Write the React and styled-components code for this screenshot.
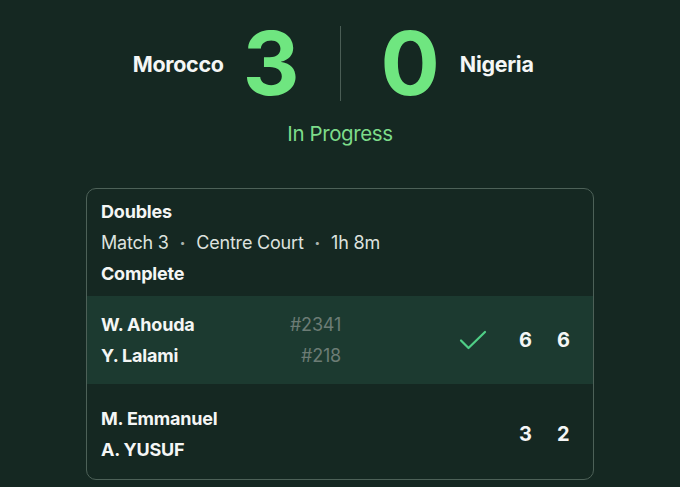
import React from "react";
import styled, { createGlobalStyle } from "styled-components";

const GlobalStyle = createGlobalStyle`
  html, body {
    margin: 0;
    padding: 0;
    background: #152822;
    font-family: Inter, "Noto Sans", sans-serif;
    color: #f4f6f5;
  }
`;

const match = {
  home: { name: "Morocco", score: 3 },
  away: { name: "Nigeria", score: 0 },
  status: "In Progress",
  event: "Doubles",
  meta: ["Match 3", "Centre Court", "1h 8m"],
  state: "Complete",
  teams: [
    {
      players: [
        { name: "W. Ahouda", rank: "#2341" },
        { name: "Y. Lalami", rank: "#218" },
      ],
      sets: [6, 6],
      winner: true,
    },
    {
      players: [{ name: "M. Emmanuel" }, { name: "A. YUSUF" }],
      sets: [3, 2],
      winner: false,
    },
  ],
};

const Page = styled.div`
  width: 680px;
  height: 487px;
  overflow: hidden;
  padding-top: 26px;
  box-sizing: border-box;
`;

const Scoreboard = styled.div`
  display: grid;
  grid-template-columns: 1fr auto 1fr;
  align-items: center;
`;

const Side = styled.div`
  display: flex;
  align-items: center;
  gap: ${(p) => (p.$align === "left" ? "19px" : "20px")};
  justify-content: ${(p) => (p.$align === "left" ? "flex-end" : "flex-start")};
`;

const Team = styled.span`
  font-size: 21.5px;
  font-weight: 700;
  letter-spacing: -0.3px;
`;

const Score = styled.span`
  font-size: 88px;
  font-weight: 700;
  line-height: 75px;
  color: #6fe680;
`;

const Divider = styled.div`
  width: 1px;
  height: 75px;
  margin: 0 40px;
  background: #4a5d55;
`;

const Status = styled.div`
  margin-top: 20px;
  text-align: center;
  font-size: 20.5px;
  color: #7ddc8a;
  letter-spacing: -0.4px;
`;

const Card = styled.div`
  margin: 42px 86px 0;
  border: 1px solid #4d6158;
  border-radius: 10px;
  overflow: hidden;
`;

const CardHead = styled.div`
  padding: 7px 14px 7px;
  font-size: 18px;
  line-height: 31px;
  letter-spacing: -0.2px;
`;

const Title = styled.div`
  font-weight: 700;
`;

const Meta = styled.div`
  display: flex;
  align-items: center;
  color: #dde2df;
`;

const Dot = styled.span`
  margin: 0 11px;
  font-size: 10px;
  color: #a9b3ae;
`;

const TeamRow = styled.div`
  display: flex;
  align-items: center;
  padding: ${(p) => (p.$highlight ? "13px 24px 13px 14px" : "19px 24px 14px 14px")};
  background: ${(p) => (p.$highlight ? "#1c3a30" : "transparent")};
`;

const Players = styled.div`
  flex: 1;
  display: flex;
  flex-direction: column;
`;

const PlayerLine = styled.div`
  width: 240px;
  display: flex;
  justify-content: space-between;
  font-size: 18px;
  line-height: 31px;
  letter-spacing: -0.2px;
`;

const PlayerName = styled.span`
  font-weight: 700;
`;

const Rank = styled.span`
  color: #6c7c75;
`;

const CheckSlot = styled.div`
  width: 28px;
  height: 26px;
  margin-right: 32px;
  display: flex;
  align-items: center;
  justify-content: center;
`;

const Sets = styled.div`
  display: flex;
  gap: 26px;
`;

const SetScore = styled.span`
  width: 12px;
  text-align: center;
  font-size: 20px;
  font-weight: 700;
`;

const CheckIcon = () => (
  <svg width="28" height="22" viewBox="0 0 28 22" fill="none">
    <path
      d="M2 11.5 L9.5 19 L26 3"
      stroke="#4fcf86"
      strokeWidth="2.2"
      strokeLinecap="round"
      strokeLinejoin="round"
    />
  </svg>
);

export default function App() {
  return (
    <Page>
      <GlobalStyle />
      <Scoreboard>
        <Side $align="left">
          <Team>{match.home.name}</Team>
          <Score>{match.home.score}</Score>
        </Side>
        <Divider />
        <Side $align="right">
          <Score>{match.away.score}</Score>
          <Team>{match.away.name}</Team>
        </Side>
      </Scoreboard>
      <Status>{match.status}</Status>

      <Card>
        <CardHead>
          <Title>{match.event}</Title>
          <Meta>
            {match.meta.map((m, i) => (
              <React.Fragment key={m}>
                {i > 0 && <Dot>•</Dot>}
                <span>{m}</span>
              </React.Fragment>
            ))}
          </Meta>
          <Title>{match.state}</Title>
        </CardHead>
        {match.teams.map((t, i) => (
          <TeamRow key={i} $highlight={t.winner}>
            <Players>
              {t.players.map((p) => (
                <PlayerLine key={p.name}>
                  <PlayerName>{p.name}</PlayerName>
                  {p.rank && <Rank>{p.rank}</Rank>}
                </PlayerLine>
              ))}
            </Players>
            <CheckSlot>{t.winner && <CheckIcon />}</CheckSlot>
            <Sets>
              {t.sets.map((s, j) => (
                <SetScore key={j}>{s}</SetScore>
              ))}
            </Sets>
          </TeamRow>
        ))}
      </Card>
    </Page>
  );
}
